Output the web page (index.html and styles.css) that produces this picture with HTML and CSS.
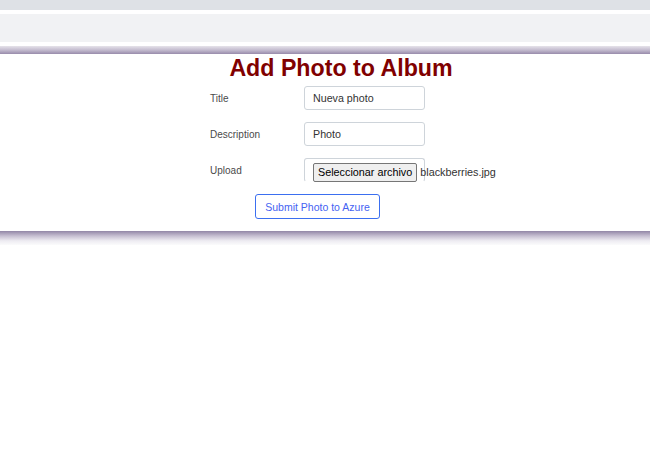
FILE: index.html
```html
<!DOCTYPE html>
<html>
<head>
<meta charset="utf-8">
<link rel="stylesheet" href="styles.css">
</head>
<body>
<div class="topbar"></div>
<div class="nav"></div>
<div class="shade-top"></div>
<div class="panel">
  <div class="form">
    <h2 class="title">Add Photo to Album</h2>
    <div class="row">
      <label class="label">Title</label>
      <div class="field"><span>Nueva photo</span></div>
    </div>
    <div class="row">
      <label class="label">Description</label>
      <div class="field"><span>Photo</span></div>
    </div>
    <div class="row">
      <label class="label">Upload</label>
      <div class="field file"><span class="file-btn">Seleccionar archivo</span><span class="file-name">blackberries.jpg</span></div>
    </div>
    <button class="submit" type="button">Submit Photo to Azure</button>
  </div>
</div>
<div class="shade-bottom"></div>
</body>
</html>
```
FILE: styles.css
```css
html, body { margin: 0; padding: 0; background: #fff; font-family: "Liberation Sans", Arial, sans-serif; }
.topbar { height: 10px; background: #dee1e6; }
.nav { height: 28px; margin-top: 4px; background: #f1f2f4; }
.shade-top { height: 8px; margin-top: 4px; background: linear-gradient(to bottom, #e6e3ea, #c4bccf 50%, #988bab); }
.panel { background: #fff; height: 177px; box-sizing: border-box; }
.form { margin-left: 210px; width: 262px; display: flex; flex-direction: column; }
.title { margin: 0; font-size: 23.2px; line-height: 28px; font-weight: bold; color: #800000; text-align: center; }
.row { display: flex; align-items: center; height: 24px; margin-top: 12px; }
.row:first-of-type { margin-top: 4px; }
.label { width: 94px; flex: none; font-size: 10px; color: #4a4a4a; }
.field { width: 121px; height: 24px; box-sizing: border-box; border: 1px solid #ced4da; border-radius: 3px; display: flex; align-items: center; padding-left: 8px; font-size: 10.7px; color: #333; }
.field.file { align-items: flex-start; padding-top: 4px; white-space: nowrap; overflow: visible; border-bottom-color: transparent; }
.file-btn { flex: none; height: 19px; box-sizing: border-box; border: 1px solid #767676; border-radius: 2px; background: #efefef; color: #000; padding: 0 4px; font-size: 10.8px; line-height: 17px; }
.file-name { flex: none; margin-left: 3px; line-height: 19px; color: #333; font-size: 10.8px; }
.submit { margin-top: 12px; margin-left: 45px; width: 125px; height: 25px; background: #fff; border: 1px solid #3b6ff0; border-radius: 3px; color: #4562f2; font-family: "Liberation Sans", Arial, sans-serif; font-size: 10.5px; padding: 0; align-self: flex-start; }
.shade-bottom { height: 14px; background: linear-gradient(to bottom, #9286a6, #c6bfd1 35%, #eeecf2 70%, #fbfbfc); }
```
